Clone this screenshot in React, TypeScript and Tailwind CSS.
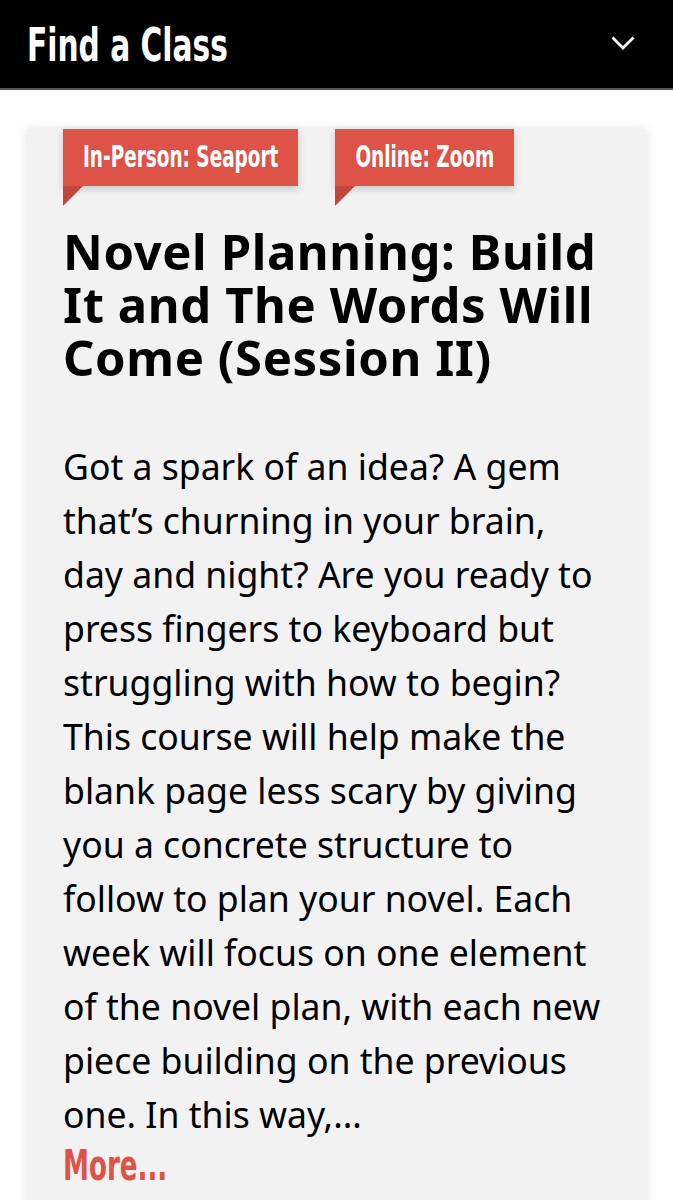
import React from "react";

const cond = { fontFamily: '"DejaVu Sans Condensed","Liberation Sans",sans-serif' };

function Tag({ label }: { label: string }) {
  return (
    <div className="relative">
      <div className="h-[57px] px-[20px] bg-[#de5347] flex items-center shadow-[0_3px_8px_rgba(0,0,0,0.18)]">
        <span className="inline-block scale-y-[1.47] text-white font-bold text-[20.5px] leading-none whitespace-nowrap" style={cond}>
          {label}
        </span>
      </div>
      <div className="absolute left-0 top-[57px] w-0 h-0 border-t-[20px] border-t-[#c3443a] border-r-[20px] border-r-transparent" />
    </div>
  );
}

const lines = [
  "Got a spark of an idea? A gem",
  "that\u2019s churning in your brain,",
  "day and night? Are you ready to",
  "press fingers to keyboard but",
  "struggling with how to begin?",
  "This course will help make the",
  "blank page less scary by giving",
  "you a concrete structure to",
  "follow to plan your novel. Each",
  "week will focus on one element",
  "of the novel plan, with each new",
  "piece building on the previous",
  "one. In this way,...",
];

export default function App() {
  return (
    <div className="min-h-[1200px] bg-white overflow-hidden">
      <header className="h-[90px] bg-black border-b-2 border-[#555] flex items-center justify-between pl-[27px] pr-[38px]">
        <span className="inline-block scale-y-[1.4] text-white font-bold text-[33px] leading-none" style={cond}>
          Find a Class
        </span>
        <svg width="24" height="14" viewBox="0 0 24 14" fill="none" className="mb-[2px]">
          <path d="M1.5 1.5 L12 12 L22.5 1.5" stroke="white" strokeWidth="2.8" />
        </svg>
      </header>
      <div className="px-[27px] pt-[62px]">
        <div className="bg-[#f2f2f2] shadow-[0_0_10px_rgba(0,0,0,0.12)] pl-[36px] pr-[30px] pb-[40px]">
          <div className="flex gap-[37px] -mt-[23px]">
            <Tag label="In-Person: Seaport" />
            <Tag label="Online: Zoom" />
          </div>
          <h1
            className="mt-[39px] text-[49px] leading-[53px] font-bold text-black tracking-[0.6px]"
            style={{ fontFamily: '"Noto Sans",sans-serif' }}
          >
            Novel Planning: Build
            <br />
            It and The Words Will
            <br />
            Come (Session II)
          </h1>
          <p
            className="mt-[55px] text-[35.6px] leading-[54px] text-black"
            style={{ fontFamily: '"Noto Sans",sans-serif' }}
          >
            {lines.map((l, i) => (
              <React.Fragment key={i}>
                {l}
                {i < lines.length - 1 && <br />}
              </React.Fragment>
            ))}
          </p>
          <a href="#" className="block mt-[10px]">
            <span className="inline-block scale-y-[1.5] text-[#de5347] font-bold text-[29px] leading-none" style={cond}>
              More...
            </span>
          </a>
        </div>
      </div>
    </div>
  );
}
